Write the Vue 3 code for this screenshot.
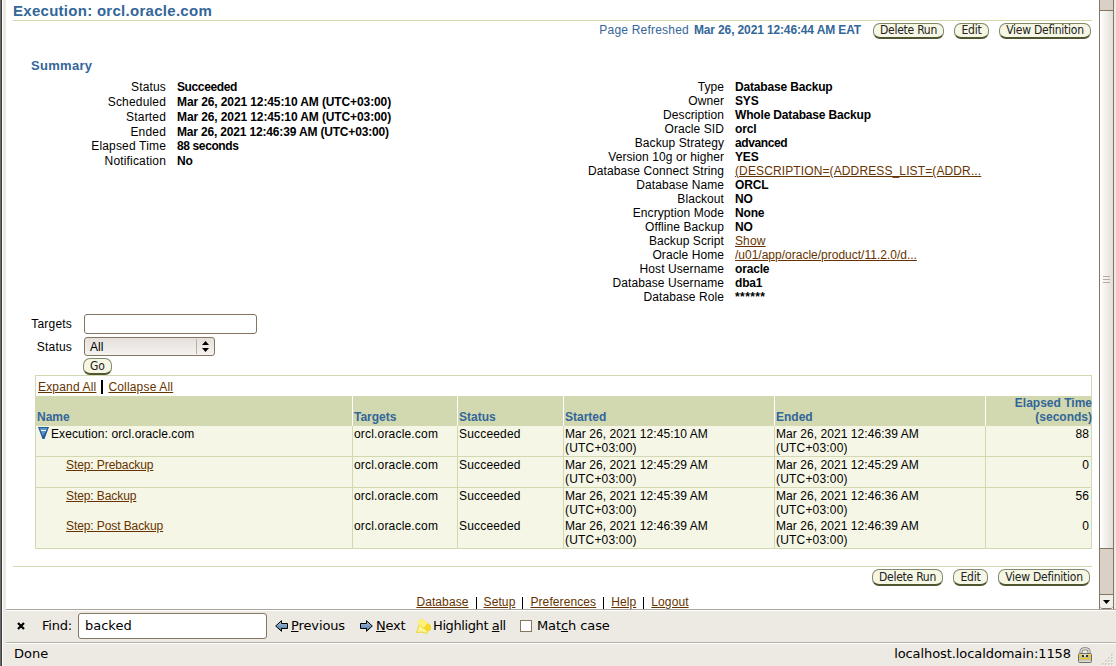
<script setup>
const left = [
  ['Status', 'Succeeded', 15, 'tight'], ['Scheduled', 'Mar 26, 2021 12:45:10 AM (UTC+03:00)', 15, 'date'],
  ['Started', 'Mar 26, 2021 12:45:10 AM (UTC+03:00)', 15, 'date'], ['Ended', 'Mar 26, 2021 12:46:39 AM (UTC+03:00)', 14, ''],
  ['Elapsed Time', '88 seconds', 15, 'tight'], ['Notification', 'No', 15, '']
]
const right = [
  ['Type', 'Database Backup'], ['Owner', 'SYS'], ['Description', 'Whole Database Backup'], ['Oracle SID', 'orcl'],
  ['Backup Strategy', 'advanced', false, 'tight'], ['Version 10g or higher', 'YES'],
  ['Database Connect String', '(DESCRIPTION=(ADDRESS_LIST=(ADDR...', true, 'wide'], ['Database Name', 'ORCL'],
  ['Blackout', 'NO'], ['Encryption Mode', 'None'], ['Offline Backup', 'NO'], ['Backup Script', 'Show', true, 'wide'],
  ['Oracle Home', '/u01/app/oracle/product/11.2.0/d...', true], ['Host Username', 'oracle'],
  ['Database Username', 'dba1'], ['Database Role', '******', false, 'stars']
]
const rows = [
  ['Execution: orcl.oracle.com', '12:45:10', '12:46:39', 88], ['Step: Prebackup', '12:45:29', '12:45:29', 0],
  ['Step: Backup', '12:45:39', '12:46:36', 56], ['Step: Post Backup', '12:46:39', '12:46:39', 0]
]
const actions = ['Delete Run', 'Edit', 'View Definition']
const footer = ['Database', 'Setup', 'Preferences', 'Help', 'Logout']
</script>

<template>
  <div class="window">
    <div class="frame"></div>
    <div class="main">
      <div class="viewport">
        <div class="page">
          <h1><span>Execution: orcl.oracle.com</span></h1>
          <div class="toolbar">
            <span class="refreshed">Page Refreshed</span><b class="time">Mar 26, 2021 12:46:44 AM EAT</b>
            <div class="actions"><button v-for="a in actions" :key="a" class="pill"><span>{{ a }}</span></button></div>
          </div>
          <h2><span>Summary</span></h2>
          <div class="summary">
            <dl class="left">
              <div v-for="r in left" :key="r[0]" :style="{ height: r[2] + 'px' }"><dt><span>{{ r[0] }}</span></dt><dd><b :class="r[3]">{{ r[1] }}</b></dd></div>
            </dl>
            <dl class="right">
              <div v-for="r in right" :key="r[0]"><dt><span>{{ r[0] }}</span></dt><dd><a v-if="r[2]" :class="r[3]">{{ r[1] }}</a><b v-else :class="r[3]">{{ r[1] }}</b></dd></div>
            </dl>
          </div>
          <div class="filters">
            <label><span>Targets</span></label><div class="input"></div>
            <label><span>Status</span></label>
            <div class="select"><span>All</span><i></i><svg width="7" height="11" viewBox="0 0 7 11"><path d="M0 4H7L3.500 0ZM0 7H7L3.500 11Z" /></svg></div>
            <label></label><button class="pill go"><span>Go</span></button>
          </div>
          <div class="tree">
            <div class="expand"><a>Expand All</a><i></i><a>Collapse All</a></div>
            <div class="row head"><div>Name</div><div>Targets</div><div>Status</div><div>Started</div><div>Ended</div><div class="num">Elapsed Time<br>(seconds)</div></div>
            <div v-for="(r, i) in rows" :key="i" class="row" :class="'r' + i">
              <div v-if="i === 0" class="root"><svg width="11" height="12" viewBox="0 0 11 12"><path d="M0 0H11L6.500 12H4.500Z" fill="#245b94" /><path d="M1.500 1H9.500L7.500 5 5 9Z" fill="#5d96c9" /><path d="M3 3.500H8" stroke="#fff" /></svg><span>{{ r[0] }}</span></div>
              <div v-else class="step"><a>{{ r[0] }}</a></div>
              <div><span class="loose">orcl.oracle.com</span></div><div><span class="loose">Succeeded</span></div>
              <div><span>Mar 26, 2021 {{ r[1] }} AM</span><br><span class="loose">(UTC+03:00)</span></div>
              <div><span>Mar 26, 2021 {{ r[2] }} AM</span><br><span class="loose">(UTC+03:00)</span></div>
              <div class="num">{{ r[3] }}</div>
            </div>
          </div>
          <div class="bottom"><div class="actions"><button v-for="a in actions" :key="a" class="pill"><span>{{ a }}</span></button></div></div>
          <nav><template v-for="(f, i) in footer" :key="f"><i v-if="i"></i><a>{{ f }}</a></template></nav>
        </div>
        <div class="scroll">
          <div class="cap"></div>
          <div class="thumb"><i></i><i></i><i></i></div>
          <div class="track"></div>
          <div class="down"><svg width="7" height="4" viewBox="0 0 7 4"><path d="M0 0H7L3.500 4Z" /></svg></div>
        </div>
        <div class="edge"></div>
      </div>
      <div class="find">
        <svg class="close" width="8" height="8" viewBox="0 0 8 8"><path d="M1 1 7 7M7 1 1 7" stroke="#000" stroke-width="2.200" /></svg>
        <span class="flabel">Find:</span><div class="fbox">backed</div>
        <svg class="arrow" width="13" height="12" viewBox="0 0 13 12"><defs><linearGradient id="ar" x2="0" y2="1"><stop stop-color="#b5cde6" /><stop offset="1" stop-color="#3f6a9b" /></linearGradient></defs><path d="M.7 6 6.500.7V3.500H12.500V8.500H6.500V11.300Z" fill="url(#ar)" stroke="#000" /></svg>
        <span class="prev"><u>P</u>revious</span>
        <svg class="arrow" width="13" height="12" viewBox="0 0 13 12"><path d="M12.300 6 6.500.7V3.500H.5V8.500H6.500V11.300Z" fill="url(#ar)" stroke="#000" /></svg>
        <span class="next"><u>N</u>ext</span>
        <svg class="marker" width="16" height="15" viewBox="0 0 16 15"><path d="M3.500 5 .5 13.500Q6 12 10.500 14.500L11.500 12 7 8Z" fill="#fdf59a" stroke="#ecd52d" /><path d="M2.500 1.500Q5-.5 8 1L15 6.500V11L12 12.500 6.500 9 2.500 5Z" fill="#f3d92a" /><path d="M2.500 1.500Q5-.5 8 1L11 3.500 7 8 2.500 5Z" fill="#fff27c" /><path d="M11 3.800 7.300 8.300" stroke="#fffbd0" /></svg>
        <span class="hl">Highlight <u>a</u>ll</span><i class="check"></i><span class="match">Mat<u>c</u>h case</span>
      </div>
      <div class="status"><span class="done">Done</span><span class="host">localhost.localdomain:1158</span>
        <svg class="lock" width="14" height="16" viewBox="0 0 14 16"><path d="M3 8V4.500Q3 1.700 7 1.700T11 4.500V8" fill="none" stroke="#77776f" stroke-width="3" /><path d="M3 8V4.500Q3 1.700 7 1.700T11 4.500V8" fill="none" stroke="#dcdcd4" stroke-width="1.500" /><rect x=".5" y="6.500" width="13" height="9" rx="1" fill="#dededa" stroke="#6d6d65" /><path d="M1 8.500H5M9 8.500H13M1 11.500H13" stroke="#ecc928" stroke-width="2" /><path d="M1 10H13M1 13H13" stroke="#a5a39a" stroke-width=".8" /><path d="M4 8H6V10H4ZM8 8H10V10H8Z" fill="#333" /></svg>
        <svg class="grip" width="12" height="12" viewBox="0 0 12 12"><path d="M9 1h2M6 4h2M9 4h2M3 7h2M6 7h2M9 7h2M0 10h2M3 10h2M6 10h2M9 10h2" stroke="#b8b4ac" /><path d="M10 2h1M7 5h1M10 5h1M4 8h1M7 8h1M10 8h1M1 11h1M4 11h1M7 11h1M10 11h1" stroke="#fff" /></svg>
      </div>
    </div>
  </div>
</template>

<style>
body { overflow: hidden; background: #edeae3; }
</style>
<style scoped>
* { box-sizing: border-box; }
.window { display: flex; width: 1116px; height: 666px; font: 12px/14px "Liberation Sans", Arial, sans-serif; color: #000; white-space: nowrap; }
.frame { width: 6px; flex: none; background: linear-gradient(90deg, #6b6b6b 0 1px, #3d3d3d 1px 2px, #fff 2px 3px, #edeae3 3px); }
.main { width: 1110px; }
.viewport { height: 609px; display: flex; background: #fff; overflow: hidden; }
.page { width: 1093px; padding: 0 7px; height: 609px; }
h1 { margin: 0; height: 21px; border-bottom: 1px solid #d2d8b0; font-size: 15px; line-height: 22px; color: #336699; letter-spacing: .28px; }
.toolbar { display: flex; justify-content: flex-end; height: 37px; padding: 2px 1px 0 0; color: #336699; }
.refreshed { line-height: 15px; letter-spacing: .2px; margin-right: 5px; }
.time { line-height: 15px; margin-right: 12px; letter-spacing: -.13px; }
.actions { display: flex; gap: 10px; height: 16px; }
.pill { height: 16px; padding: 0; width: 71px; border: 1px solid #82886a; border-bottom: 2px solid #4f5530; border-radius: 7px; background: #f5f6e4; font: 12px/13px "DejaVu Sans Condensed", "DejaVu Sans", sans-serif; font-stretch: condensed; letter-spacing: -.25px; color: #222; white-space: nowrap; }
.pill:nth-child(2) { width: 35px; }
.pill:nth-child(3) { width: 92px; }
h2 { margin: 0; height: 22px; padding-left: 18px; font-size: 13px; line-height: 16px; color: #336699; letter-spacing: .3px; }
.summary { display: flex; height: 233px; }
dl { margin: 0; }
dl > div { display: flex; height: 14px; }
dt { text-align: right; letter-spacing: .08px; }
dd { margin: 0 0 0 11px; }
dd b { letter-spacing: -.17px; }
.date { letter-spacing: -.11px; }
dd .tight { letter-spacing: -.38px; }
dd .stars { letter-spacing: .4px; }
.wide { letter-spacing: .12px; }
.left { width: 558px; }
.left dt { width: 153px; letter-spacing: .17px; }
.right dt { width: 153px; }
a { color: #663300; text-decoration: underline; }
.filters { display: grid; grid-template-columns: 59px 174px; column-gap: 12px; grid-template-rows: 23px 22px 17px; height: 62px; }
.filters label { text-align: right; line-height: 22px; letter-spacing: .2px; }
.input { height: 20px; width: 173px; border: 1px solid #857563; border-radius: 3px; margin-top: 1px; }
.select { width: 131px; height: 19px; border: 1px solid #857563; border-radius: 3px; background: linear-gradient(#e4dfda, #f5f3f0); display: flex; align-items: center; padding-left: 5px; margin-top: 1px; }
.select i { margin-left: auto; height: 15px; border-left: 1px solid #b9b1a8; margin-right: 5px; }
.select svg { margin-right: 5px; }
.go { width: 29px; height: 17px; margin-left: -1px; letter-spacing: 0; }
.tree { width: 1057px; margin-left: 22px; border: 1px solid #d2d8b0; }
.expand { height: 20px; display: flex; padding: 4px 0 0 2px; letter-spacing: .17px; }
.expand i { width: 2px; height: 14px; background: #000; margin: 0 5px; }
.row { display: grid; grid-template-columns: 316px 105px 106px 211px 211px 106px; height: 31px; background: #f5f6e5; letter-spacing: .06px; }
.row > div { border-left: 1px solid #d2d8b0; padding: 1px 0 0 1px; }
.row > div:first-child { border-left: 0; }
.loose { letter-spacing: .18px; }
.head { height: 30px; background: #d2d8b0; font-weight: bold; color: #336699; letter-spacing: 0; }
.row.head > div { border-color: #fff; padding-top: 14px; }
.row.head > .num { padding-top: 0; padding-right: 0; margin-right: -1px; }
.num { text-align: right; }
.row > .num { padding-right: 2px; }
.r1, .r2 { border-top: 1px solid #d2d8b0; }
.r0, .r3 { height: 30px; }
.root { display: flex; letter-spacing: .1px; }
.root svg { margin: 0 2px 0 1px; }
.row > .step { padding-left: 30px; letter-spacing: -.09px; }
.bottom { margin-top: 17px; border-top: 1px solid #d2d8b0; height: 29px; padding: 2px 2px 0 0; display: flex; justify-content: flex-end; }
.bottom .pill { height: 17px; }
nav { display: flex; justify-content: center; letter-spacing: .1px; }
nav i { width: 1px; height: 12px; background: #000; margin: 2px 7px 0; }
.scroll { width: 15px; height: 609px; border: solid #857563; border-width: 0 1px; display: flex; flex-direction: column; }
.edge { width: 2px; background: #edeae3; }
.cap { height: 11px; background: #d9d1c7; border-bottom: 1px solid #857563; }
.thumb { height: 538px; background: linear-gradient(90deg, #fff, #e2ddd7); border-bottom: 1px solid #857563; display: flex; flex-direction: column; align-items: center; justify-content: center; gap: 2px; }
.thumb i { width: 7px; height: 1px; background: #b5aca0; }
.track { flex: 1; background: #d9d1c7; }
.down { height: 15px; border: solid #857563; border-width: 1px 0; border-radius: 0 0 3px 3px; background: #f2efeb; display: flex; align-items: center; justify-content: center; }
.find { height: 33px; border-top: 1px solid #aaa59c; box-shadow: inset 0 1px #fff; background: #edeae3; display: flex; align-items: center; font: 13px "DejaVu Sans", sans-serif; }
.find > span { position: relative; top: -1px; }
.close { margin: 0 17px 0 11px; }
.flabel { width: 36px; letter-spacing: -.2px; }
.fbox { width: 189px; height: 26px; border: 1px solid #857563; border-radius: 3px; background: #fff; line-height: 24px; padding-left: 6px; margin-right: 8px; }
.prev { margin-left: 3px; width: 69px; letter-spacing: -.12px; }
.next { margin-left: 3px; width: 40px; letter-spacing: -.2px; }
.hl { width: 87px; margin-left: 1px; letter-spacing: -.4px; }
.check { width: 12px; height: 12px; border: 1px solid #857563; background: #fff; margin-right: 5px; }
.match { letter-spacing: -.1px; }
.status { height: 24px; border-top: 1px solid #b5b1a9; box-shadow: inset 0 1px #fff; background: #edeae3; display: flex; align-items: center; font: 13px "DejaVu Sans", sans-serif; padding-left: 8px; }
.done, .host { position: relative; top: -1px; }
.host { margin-left: auto; margin-right: 7px; letter-spacing: -.08px; }
.grip { margin-left: 10px; margin-right: 2px; align-self: flex-end; }
</style>
